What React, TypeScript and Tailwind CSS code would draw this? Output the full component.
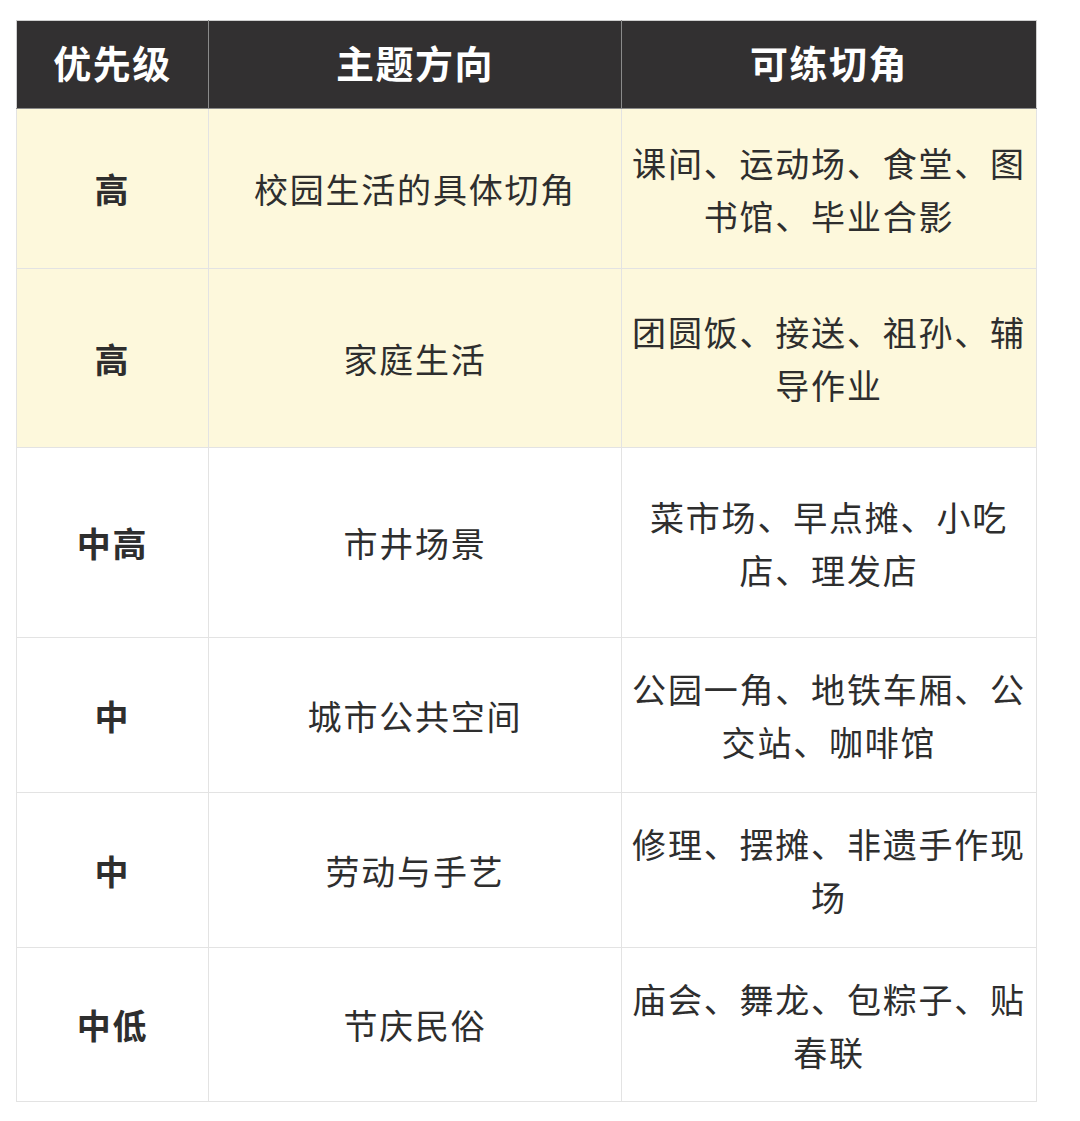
const rows = [
  { level: "高", topic: "校园生活的具体切角", angle: "课间、运动场、食堂、图书馆、毕业合影", h: "h-[160px]", hl: true },
  { level: "高", topic: "家庭生活", angle: "团圆饭、接送、祖孙、辅导作业", h: "h-[179px]", hl: true },
  { level: "中高", topic: "市井场景", angle: "菜市场、早点摊、小吃店、理发店", h: "h-[190px]", hl: false },
  { level: "中", topic: "城市公共空间", angle: "公园一角、地铁车厢、公交站、咖啡馆", h: "h-[155px]", hl: false },
  { level: "中", topic: "劳动与手艺", angle: "修理、摆摊、非遗手作现场", h: "h-[155px]", hl: false },
  { level: "中低", topic: "节庆民俗", angle: "庙会、舞龙、包粽子、贴春联", h: "h-[154px]", hl: false },
];

export default function App() {
  return (
    <div className="w-[1080px] h-[1121px] bg-white pt-[20px] pl-[16px] font-['Noto_Sans_CJK_SC',sans-serif]">
      <table className="border-collapse table-fixed w-[1020px]">
        <colgroup>
          <col className="w-[192px]" />
          <col className="w-[413px]" />
          <col className="w-[415px]" />
        </colgroup>
        <thead>
          <tr className="h-[88px] bg-[#323031] text-white text-[38px] leading-[40px] font-black tracking-[1.5px]">
            <th className="border border-[#8a8a8a] border-t-[#cfcfcf] border-l-[#cfcfcf] pb-[5px]">优先级</th>
            <th className="border border-[#8a8a8a] border-t-[#cfcfcf] pb-[5px]">主题方向</th>
            <th className="border border-[#8a8a8a] border-t-[#cfcfcf] border-r-[#cfcfcf] pb-[5px]">可练切角</th>
          </tr>
        </thead>
        <tbody className="text-[#2e2e2e] text-[34px] leading-[53px] tracking-[1.8px]">
          {rows.map((r, i) => (
            <tr key={i} className={`${r.h} ${r.hl ? "bg-[#fdf8dc]" : "bg-white"}`}>
              <td className="border border-[#e3e3e3] text-center font-bold">{r.level}</td>
              <td className="border border-[#e3e3e3] text-center">{r.topic}</td>
              <td className="border border-[#e3e3e3] text-center px-[8px]">{r.angle}</td>
            </tr>
          ))}
        </tbody>
      </table>
    </div>
  );
}
